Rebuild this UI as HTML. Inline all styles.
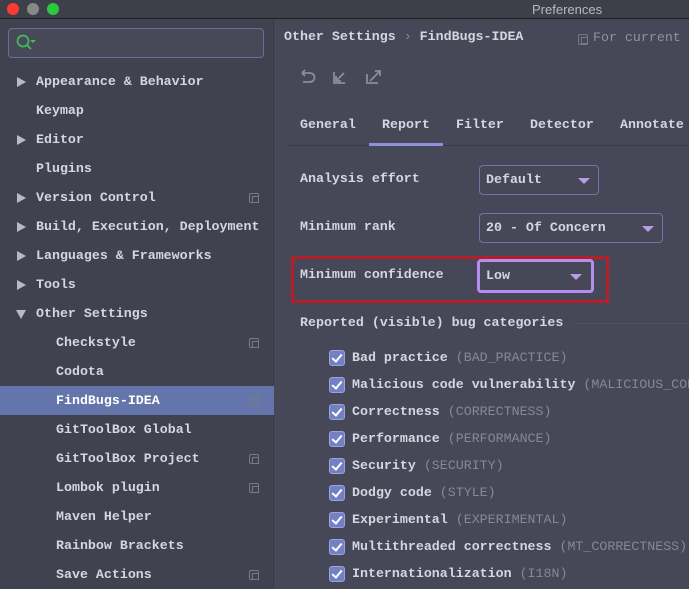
<!DOCTYPE html>
<html><head><style>
*{margin:0;padding:0;box-sizing:border-box}
body{width:689px;height:589px;overflow:hidden;background:#464857;font-family:"Liberation Mono",monospace;font-size:13.3px;color:#d4d6e0;font-weight:bold;position:relative}
.t{position:absolute;white-space:nowrap}
#title{position:absolute;left:0;top:0;width:689px;height:19px;background:#3d3f49;border-bottom:1px solid #1e1f24}
#title span{position:absolute;left:532px;top:2px;font-family:"Liberation Sans",sans-serif;font-weight:normal;font-size:13px;color:#b8b9c0}
.dot{position:absolute;top:3px;width:12px;height:12px;border-radius:50%}
#side{position:absolute;left:0;top:19px;width:274px;height:570px;background:#40424f;border-right:1px solid #363845}
.row{position:absolute;left:0;width:274px;height:29px;line-height:29px}
.sel{background:#6475ab;color:#fff}
.arr{position:absolute;left:17px;top:10px;width:0;height:0;border-top:5px solid transparent;border-bottom:5px solid transparent;border-left:9px solid #b8bac4}
.arrd{position:absolute;left:16px;top:11px;border-left:5px solid transparent;border-right:5px solid transparent;border-top:9px solid #b8bac4}
.ic{position:absolute;left:249px;top:10px;width:10px;height:10px;border:1.5px solid #777a88;border-radius:2px}
.ic:after{content:"";position:absolute;left:2px;top:2px;width:5px;height:5px;border:1px solid #777a88}
.cb{position:absolute;left:329px;width:16px;height:16px;background:#7480c4;border:1px solid #9aa3e0;border-radius:3px}
.cb:after{content:"";position:absolute;left:4px;top:1px;width:4px;height:8px;border:solid #fff;border-width:0 2px 2px 0;transform:rotate(40deg)}
.g{color:#868896;font-weight:normal}
.combo{position:absolute;height:30px;border:1px solid #6f73a6;border-radius:4px;background:#464857;line-height:28px;padding-left:6px}
.tri{position:absolute;top:12px;border-left:6px solid transparent;border-right:6px solid transparent;border-top:6px solid #b79ce8}
</style></head><body>
<div id="title"><div class="dot" style="left:7px;background:#fe3b30"></div><div class="dot" style="left:27px;background:#888"></div><div class="dot" style="left:47px;background:#2bc940"></div><span>Preferences</span></div>
<div id="side">
<div style="position:absolute;left:8px;top:9px;width:256px;height:30px;border:1px solid #6a6d9f;border-radius:4px;background:#474958">
<svg width="24" height="20" style="position:absolute;left:7px;top:5px"><circle cx="7" cy="7" r="5.5" fill="none" stroke="#3cbf5a" stroke-width="1.7"/><line x1="11" y1="11" x2="15" y2="15" stroke="#3cbf5a" stroke-width="1.7"/><path d="M14 6 L20 6 L17 9Z" fill="#3cbf5a"/></svg></div>
<div class="row" style="top:48px"><div class="arr"></div><span class="t" style="left:36px">Appearance &amp; Behavior</span></div>
<div class="row" style="top:77px"><span class="t" style="left:36px">Keymap</span></div>
<div class="row" style="top:106px"><div class="arr"></div><span class="t" style="left:36px">Editor</span></div>
<div class="row" style="top:135px"><span class="t" style="left:36px">Plugins</span></div>
<div class="row" style="top:164px"><div class="arr"></div><span class="t" style="left:36px">Version Control</span><div class="ic"></div></div>
<div class="row" style="top:193px"><div class="arr"></div><span class="t" style="left:36px">Build, Execution, Deployment</span></div>
<div class="row" style="top:222px"><div class="arr"></div><span class="t" style="left:36px">Languages &amp; Frameworks</span></div>
<div class="row" style="top:251px"><div class="arr"></div><span class="t" style="left:36px">Tools</span></div>
<div class="row" style="top:280px"><div class="arrd"></div><span class="t" style="left:36px">Other Settings</span></div>
<div class="row" style="top:309px"><span class="t" style="left:56px">Checkstyle</span><div class="ic"></div></div>
<div class="row" style="top:338px"><span class="t" style="left:56px">Codota</span></div>
<div class="row sel" style="top:367px"><span class="t" style="left:56px">FindBugs-IDEA</span><div class="ic"></div></div>
<div class="row" style="top:396px"><span class="t" style="left:56px">GitToolBox Global</span></div>
<div class="row" style="top:425px"><span class="t" style="left:56px">GitToolBox Project</span><div class="ic"></div></div>
<div class="row" style="top:454px"><span class="t" style="left:56px">Lombok plugin</span><div class="ic"></div></div>
<div class="row" style="top:483px"><span class="t" style="left:56px">Maven Helper</span></div>
<div class="row" style="top:512px"><span class="t" style="left:56px">Rainbow Brackets</span></div>
<div class="row" style="top:541px"><span class="t" style="left:56px">Save Actions</span><div class="ic"></div></div>
</div>
<span class="t" style="left:284px;top:29px">Other Settings <span class="g">›</span> FindBugs-IDEA</span>
<div class="ic" style="left:578px;top:34px;width:10px;height:11px"></div>
<span class="t g" style="left:593px;top:30px;color:#8f919e">For current</span>
<svg width="100" height="20" style="position:absolute;left:298px;top:68px" fill="none" stroke="#8a8c9a" stroke-width="1.8"><path d="M4 5 H12 A4.5 4.5 0 0 1 12 14 H5 M4 5 L7 2 M4 5 L7 8"/><path d="M36 4 V15 H47 M46 5 L38 13 M38 8 V13 H43"/><path d="M69 6 V15 H80 M72 13 L82 3 M77 3 H82 V8"/></svg>
<span class="t" style="left:300px;top:117px">General</span>
<span class="t" style="left:382px;top:117px">Report</span>
<span class="t" style="left:456px;top:117px">Filter</span>
<span class="t" style="left:530px;top:117px">Detector</span>
<span class="t" style="left:620px;top:117px">Annotate</span>
<div style="position:absolute;left:288px;top:145px;width:401px;height:1px;background:#3a3c48"></div>
<div style="position:absolute;left:369px;top:143px;width:74px;height:3px;background:#8f8fe0"></div>
<span class="t" style="left:300px;top:171px">Analysis effort</span>
<div class="combo" style="left:479px;top:165px;width:120px">Default<div class="tri" style="left:98px"></div></div>
<span class="t" style="left:300px;top:219px">Minimum rank</span>
<div class="combo" style="left:479px;top:213px;width:184px">20 - Of Concern<div class="tri" style="left:162px"></div></div>
<div style="position:absolute;left:291px;top:256px;width:318px;height:47px;border:3px solid #b3202a;border-radius:2px"></div>
<span class="t" style="left:300px;top:267px">Minimum confidence</span>
<div class="combo" style="left:477px;top:259px;width:117px;height:34px;border:3px solid #b58ef0;line-height:28px">Low<div class="tri" style="left:90px"></div></div>
<span class="t" style="left:300px;top:315px">Reported (visible) bug categories</span>
<div style="position:absolute;left:574px;top:323px;width:115px;border-top:1px dotted #5a5c6a"></div>
<div class="cb" style="top:350px"></div><span class="t" style="left:352px;top:350px">Bad practice <span class="g">(BAD_PRACTICE)</span></span>
<div class="cb" style="top:377px"></div><span class="t" style="left:352px;top:377px">Malicious code vulnerability <span class="g">(MALICIOUS_CODE)</span></span>
<div class="cb" style="top:404px"></div><span class="t" style="left:352px;top:404px">Correctness <span class="g">(CORRECTNESS)</span></span>
<div class="cb" style="top:431px"></div><span class="t" style="left:352px;top:431px">Performance <span class="g">(PERFORMANCE)</span></span>
<div class="cb" style="top:458px"></div><span class="t" style="left:352px;top:458px">Security <span class="g">(SECURITY)</span></span>
<div class="cb" style="top:485px"></div><span class="t" style="left:352px;top:485px">Dodgy code <span class="g">(STYLE)</span></span>
<div class="cb" style="top:512px"></div><span class="t" style="left:352px;top:512px">Experimental <span class="g">(EXPERIMENTAL)</span></span>
<div class="cb" style="top:539px"></div><span class="t" style="left:352px;top:539px">Multithreaded correctness <span class="g">(MT_CORRECTNESS)</span></span>
<div class="cb" style="top:566px"></div><span class="t" style="left:352px;top:566px">Internationalization <span class="g">(I18N)</span></span>
</body></html>
